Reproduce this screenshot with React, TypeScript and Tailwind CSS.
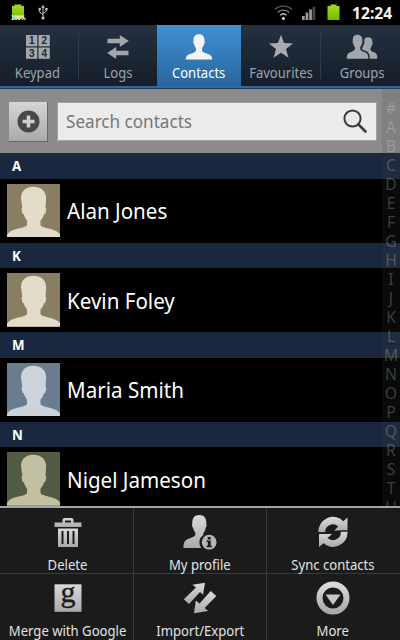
import React from 'react';

interface Contact {
  letter: string;
  name: string;
  bg: string;
  fg: string;
}

const contacts: Contact[] = [
  { letter: 'A', name: 'Alan Jones', bg: '#8a7e62', fg: '#e3dccb' },
  { letter: 'K', name: 'Kevin Foley', bg: '#8a7e62', fg: '#e3dccb' },
  { letter: 'M', name: 'Maria Smith', bg: '#6a7d8f', fg: '#ccd3da' },
  { letter: 'N', name: 'Nigel Jameson', bg: '#525b43', fg: '#c3c0a2' },
];

const indexLetters = '#ABCDEFGHIJKLMNOPQRSTU'.split('');

const KeypadIcon = () => (
  <svg width="26" height="26" viewBox="0 0 26 26">
    <g fill="#a3a6aa">
      <rect x="1" y="1" width="11.3" height="11.3" />
      <rect x="13.5" y="1" width="11.3" height="11.3" />
      <rect x="1" y="13.5" width="11.3" height="11.3" />
      <rect x="13.5" y="13.5" width="11.3" height="11.3" />
    </g>
    <g fill="#1d2735" fontSize="10" fontWeight="bold" fontFamily="Liberation Sans, sans-serif" textAnchor="middle">
      <text x="6.7" y="10.3">1</text>
      <text x="19.2" y="10.3">2</text>
      <text x="6.7" y="22.8">3</text>
      <text x="19.2" y="22.8">4</text>
    </g>
  </svg>
);

const LogsIcon = () => (
  <svg width="26" height="26" viewBox="0 0 26 26" fill="#a3a6aa">
    <path d="M2.500 4.800h12.300V1l9 6-9 6V9.200H2.500z" />
    <path d="M23.500 16.800H11.200V13l-9 6 9 6v-3.800h12.300z" />
  </svg>
);

const ContactIcon = () => (
  <svg width="28" height="26" viewBox="0 0 28 26" fill="#f4f4f4">
    <path d="M14 .3c3.800 0 5.700 2.600 5.500 6.200l.2 1.300c.2 1-.1 1.700-.6 2-.3 1.700-1.100 3.200-2 4.100v2.500c.5 2 2.700 2.500 5.400 3.400 3 1 4.500 2.400 4.800 5.700H.700c.3-3.300 1.800-4.700 4.800-5.700 2.700-.9 4.900-1.400 5.400-3.400v-2.500c-.9-.9-1.700-2.400-2-4.100-.5-.3-.8-1-.6-2l.2-1.300C8.300 2.900 10.200.3 14 .3z" />
  </svg>
);

const StarIcon = () => (
  <svg width="26" height="26" viewBox="0 0 26 26" fill="#a8abaf">
    <path d="M13 .8l3.100 8.300 8.900.3-7 5.500 2.500 8.900-7.500-5-7.500 5L8 14.900 1 9.400l8.900-.3z" />
  </svg>
);

const GroupsIcon = () => (
  <svg width="32" height="26" viewBox="0 0 32 26" fill="#a3a6aa">
    <path d="M11.500.7c3.300 0 5 2.200 4.800 5.700.4 1.300.2 2.500-.4 3-.3 1.600-.9 2.700-1.700 3.600v2c.5 1.700 2 2.300 4.200 3 2.900 1 4 2.500 4 6.800H.8c0-4.300 1.100-5.800 4-6.800 2.200-.7 3.600-1.300 4.100-3v-2C8.100 12.100 7.500 11 7.200 9.400c-.6-.5-.8-1.700-.4-3C6.600 2.900 8.200.7 11.500.7z" />
    <path d="M22 3.200c2.900 0 4.600 1.900 4.400 5 .3 1.200.2 2.200-.4 2.700-.2 1.400-.8 2.400-1.500 3.200v1.600c.4 1.400 1.700 1.900 3.500 2.600 2.500.9 3.300 2.300 3.300 6.500h-7.500c0-4.800-1.300-6.800-4.600-8-1.400-.5-2.700-1-3.100-1.700v-1c.8-1 1.300-2.100 1.600-3.500.8-.9.9-2 .6-3.200V5.600c.6-1.600 1.900-2.400 3.700-2.400z" />
  </svg>
);

const Avatar = ({ bg, fg }: { bg: string; fg: string }) => (
  <svg width="53.500" height="53.500" viewBox="0 0 160 160" className="block shrink-0">
    <rect width="160" height="160" fill={bg} />
    <path
      fill={fg}
      d="M79 8C102 8 118 22 117 44L115 72c3 0 3 5 1 10-1 8-3 9-5 8-2 9-6 14-11 20v12c1 4 6 6 15 9 15 4 38 8 45 22v5H0v-5c6-14 25-18 45-22 8-3 14-5 15-9v-12c-4-6-8-11-10-20-2 1-4 0-5-8-2-5-2-10 1-10L42 44C41 22 55 8 79 8zM0 156h160v4H0z"
    />
    <rect y="151" width="160" height="9" fill={fg} />
  </svg>
);

const StatusBar = () => (
  <div className="h-[25px] bg-black flex items-center relative shrink-0">
    <svg width="400" height="25" viewBox="0 0 400 25">
      <defs>
        <linearGradient id="battery" x1="0" y1="0" x2="0" y2="1">
          <stop offset="0" stopColor="#a6dc1c" />
          <stop offset="1" stopColor="#79b800" />
        </linearGradient>
      </defs>
      <path d="M14.500 4.500h7V6H24v13H12V6h2.500z" fill="url(#battery)" />
      <text x="11" y="20.300" fontSize="6.500" fontWeight="bold" fontFamily="DejaVu Sans, sans-serif" fill="#fff" textLength="14.500" lengthAdjust="spacingAndGlyphs">
        100%
      </text>
      <g stroke="#c4c4c4" fill="none" strokeWidth="1">
        <path d="M43 7v10M39.700 9.500v2.700l3.300 2.300M46.300 9v2.200L43 13.500" />
      </g>
      <g fill="#c4c4c4">
        <path d="M43 4.800l1.800 3h-3.600z" />
        <circle cx="43" cy="18" r="1.600" />
        <circle cx="39.700" cy="9" r="1.300" />
        <rect x="45.300" y="8" width="2.300" height="2.300" />
      </g>
      <g fill="none" strokeWidth="1.300">
        <path d="M274.800 9.500a12.500 12.500 0 0 1 17.200 0" stroke="#5b5b5b" />
        <path d="M277.500 12.500a8.500 8.500 0 0 1 11.800 0" stroke="#858585" />
        <path d="M280.300 15.200a4.600 4.600 0 0 1 6.200 0" stroke="#c9c9c9" />
      </g>
      <circle cx="283.400" cy="18.500" r="1.500" fill="#dcdcdc" />
      <g fill="#9a9a9a">
        <rect x="302" y="16" width="2.700" height="4" />
        <rect x="305.600" y="12.500" width="2.700" height="7.500" />
        <rect x="309.200" y="9.500" width="2.700" height="10.500" />
        <rect x="312.600" y="7" width="1.300" height="13" fill="#555" />
        <rect x="313.900" y="6.500" width="1.500" height="13.500" fill="#3d3d3d" />
      </g>
      <path d="M330.500 4.500h6V6h3v14h-12V6h3z" fill="url(#battery)" />
    </svg>
    <span className="absolute left-[352px] top-[3px] text-[16px] leading-[20px] font-bold text-[#f0f0f0] origin-left scale-x-[0.98]">12:24</span>
  </div>
);

const tabs = [
  { label: 'Keypad', icon: <KeypadIcon />, box: 'w-[75px] mr-[3px]' },
  { label: 'Logs', icon: <LogsIcon />, box: 'w-[79px] pl-px' },
  { label: 'Contacts', icon: <ContactIcon />, box: 'w-[84px]' },
  { label: 'Favourites', icon: <StarIcon />, box: 'w-[79px]' },
  { label: 'Groups', icon: <GroupsIcon />, box: 'w-[80px] pl-[4px]' },
];

const TabBar = () => (
  <div className="shrink-0">
    <div className="h-[61px] flex bg-linear-to-b from-[#253141] to-[#151e2a]">
      {tabs.map((tab, i) => {
        const active = tab.label === 'Contacts';
        return (
          <React.Fragment key={tab.label}>
            {(i === 1 || i === 4) && <div className="w-px my-[7px] -mr-px bg-[#2f3b4b]" />}
            <div
              className={`${tab.box} shrink-0 flex flex-col items-center pt-[9px] whitespace-nowrap ${
                active ? 'bg-linear-to-b from-[#4091d6] to-[#28669c] text-white' : 'text-[#9da3aa]'
              }`}
            >
              {tab.icon}
              <span className="text-[13.500px] leading-[18px] mt-[4px] scale-x-[0.965]">{tab.label}</span>
            </div>
          </React.Fragment>
        );
      })}
    </div>
    <div className="h-[2px] bg-[#2f6899]" />
    <div className="h-px bg-[#25405a]" />
  </div>
);

const SearchBar = () => (
  <div className="h-[64px] shrink-0 bg-[#8b8b8b] flex items-start pt-[13px] pl-[9px]">
    <div className="w-[39px] h-[40px] bg-linear-to-b from-[#d6d6d6] to-[#a9a9a9] border-b border-r border-[#666] flex items-center justify-center">
      <svg width="23" height="23" viewBox="0 0 23 23">
        <circle cx="11.500" cy="11.500" r="11" fill="#484848" />
        <path d="M9.700 5.500h3.600v4.200h4.200v3.600h-4.200v4.200H9.700v-4.200H5.500V9.700h4.200z" fill="#d0d0d0" />
      </svg>
    </div>
    <div className="ml-[9px] w-[320px] h-[39px] border border-[#a2a2a2] bg-[#ebebeb] flex items-center justify-between pl-[8px] pr-[8px]">
      <span className="text-[18px] leading-[24px] mb-[2px] text-[#777] origin-left scale-x-[0.95]">Search contacts</span>
      <svg width="26" height="26" viewBox="0 0 26 26" fill="none" stroke="#3b3b3b" className="mb-px">
        <circle cx="10.500" cy="10.500" r="8.100" strokeWidth="2" />
        <path d="M16.500 16.500l7 7" strokeWidth="2.600" strokeLinecap="round" />
      </svg>
    </div>
  </div>
);

const ContactRow = ({ contact }: { contact: Contact }) => (
  <div className="h-[89.500px] shrink-0">
    <div className="h-[25.500px] bg-[#19283e] pl-[12px] text-[14px] leading-[26px] font-bold text-white">
      <span className="inline-block origin-left scale-x-[0.95]">{contact.letter}</span>
    </div>
    <div className="pt-[5px] pl-[6.500px] flex items-center">
      <Avatar bg={contact.bg} fg={contact.fg} />
      <span className="ml-[7px] text-[22px] leading-[30px] text-white whitespace-nowrap origin-left scale-x-[0.935]">
        {contact.name}
      </span>
    </div>
  </div>
);

const menuIcons = {
  trash: (
    <svg width="34" height="34" viewBox="0 0 34 34" fill="url(#metal)">
      <path fillRule="evenodd" d="M3.500 7.500h8V5a2 2 0 0 1 2-2h7a2 2 0 0 1 2 2v2.500h8V12h-27zM14 5.500v2h6v-2z" />
      <path fillRule="evenodd" d="M7 13.500h20V32H7zM10.500 16v13h2V16zM16 16v13h2V16zM21.500 16v13h2V16z" />
    </svg>
  ),
  profile: (
    <svg width="34" height="36" viewBox="0 0 34 36">
      <path fill="url(#metal)" d="M16.300 0c4.800 0 7.300 3.200 7 8.400.5 1.800.1 3.500-.6 4.300-.5 2.500-1.300 4.200-2.400 5.400v2a8.800 8.800 0 0 0-2 12.900H.400c0-6 1.700-8 6-9.500 3.500-1.200 5.500-2 6-4.200v-1.700c-1.100-1.200-1.900-2.700-2.400-4.900-.9-.7-1.200-2.500-.7-4.300C9 3.200 11.500 0 16.300 0z" />
      <circle cx="26.200" cy="27.200" r="7.400" fill="#b5b5b5" />
      <path d="M24.700 22h3v2.500h-3zM23.500 25.500h4.200v5.200h1.300v1.600h-5.500v-1.600h1.300v-3.600h-1.300z" fill="#1b1b1b" />
    </svg>
  ),
  sync: (
    <svg width="34" height="34" viewBox="0 0 34 34" fill="url(#metal)">
      <path d="M2.500 17.500A14.500 14.500 0 0 1 27.400 6.300L31.500 2.500v13H18.300l4-4.100A7.800 7.800 0 0 0 9.200 17.500z" />
      <path d="M31.500 16.500A14.500 14.500 0 0 1 7.600 28.300L3 32V18.900H16l-4.400 4A7.800 7.800 0 0 0 24.800 16.500z" />
      <path d="M2.500 17.700h7.500M24 16h7.500" stroke="#1b1b1b" strokeWidth="1" />
    </svg>
  ),
  google: (
    <svg width="34" height="34" viewBox="0 0 34 34">
      <rect x="3.500" y="3.300" width="27" height="27.500" fill="url(#metal)" />
      <text x="17" y="21.300" fontSize="30" fontFamily="Liberation Serif, serif" fill="#1b1b1b" stroke="#1b1b1b" strokeWidth="0.400" textAnchor="middle">
        g
      </text>
    </svg>
  ),
  transfer: (
    <svg width="34" height="34" viewBox="0 0 34 34" fill="url(#metal)">
      <path d="M.8 18.300L13 6.500 9.500 3.800 22 1.700 20 13.700 17 11 6 23z" />
      <path d="M33.300 15L21.700 27l3.400 3L11 32.300l1.800-12.700 3.800 3L27.700 10z" />
    </svg>
  ),
  more: (
    <svg width="34" height="34" viewBox="0 0 34 34">
      <circle cx="17" cy="17" r="13.500" fill="none" stroke="url(#metal)" strokeWidth="6" />
      <path d="M9.500 13.500h15L17 24z" fill="#c6c6c6" />
    </svg>
  ),
};

const menuItems = [
  { label: 'Delete', icon: menuIcons.trash, box: 'border-r border-b pl-[2px]' },
  { label: 'My profile', icon: menuIcons.profile, box: 'border-r border-b' },
  { label: 'Sync contacts', icon: menuIcons.sync, box: 'border-b pr-[2px]' },
  { label: 'Merge with Google', icon: menuIcons.google, box: 'border-r pl-[2px]' },
  { label: 'Import/Export', icon: menuIcons.transfer, box: 'border-r' },
  { label: 'More', icon: menuIcons.more, box: 'pr-[2px]' },
];

const OptionsMenu = () => (
  <div className="h-[134px] shrink-0 bg-[#1b1b1b] border-t-2 border-[#a5a5a5] grid grid-cols-[134px_133px_133px] grid-rows-[66px_66px]">
    {menuItems.map((item) => (
      <div
        key={item.label}
        className={`flex flex-col items-center pt-[7px] border-[#3a3a3a] whitespace-nowrap ${item.box}`}
      >
        <div className="h-[34px] flex justify-center">{item.icon}</div>
        <span className="text-[13.500px] leading-[18px] mt-[7px] text-[#e2e2e2] scale-x-[0.97]">{item.label}</span>
      </div>
    ))}
  </div>
);

const App: React.FC = () => {
  return (
    <div className="w-[400px] h-[640px] overflow-hidden bg-black flex flex-col relative font-['Noto_Sans',sans-serif]">
      {/* Shared gradient for the menu icons */}
      <svg width="0" height="0" className="absolute">
        <defs>
          <linearGradient id="metal" x1="0" y1="0" x2="0" y2="1">
            <stop offset="0" stopColor="#dadada" />
            <stop offset="1" stopColor="#a9a9a9" />
          </linearGradient>
        </defs>
      </svg>
      <StatusBar />
      <TabBar />
      <div className="h-[417px] shrink-0 relative overflow-hidden flex flex-col">
        <SearchBar />
        {contacts.map((contact) => (
          <ContactRow key={contact.letter} contact={contact} />
        ))}
        {/* Alphabet index */}
        <div className="absolute right-0 top-0 bottom-0 w-[18px] bg-[#404040]/15 pt-[9px] text-white/22 text-center text-[16.500px]">
          {indexLetters.map((letter) => (
            <div key={letter} className="h-[19px] leading-[19px] scale-x-[0.95]">
              {letter}
            </div>
          ))}
        </div>
      </div>
      <OptionsMenu />
    </div>
  );
};

export default App;
